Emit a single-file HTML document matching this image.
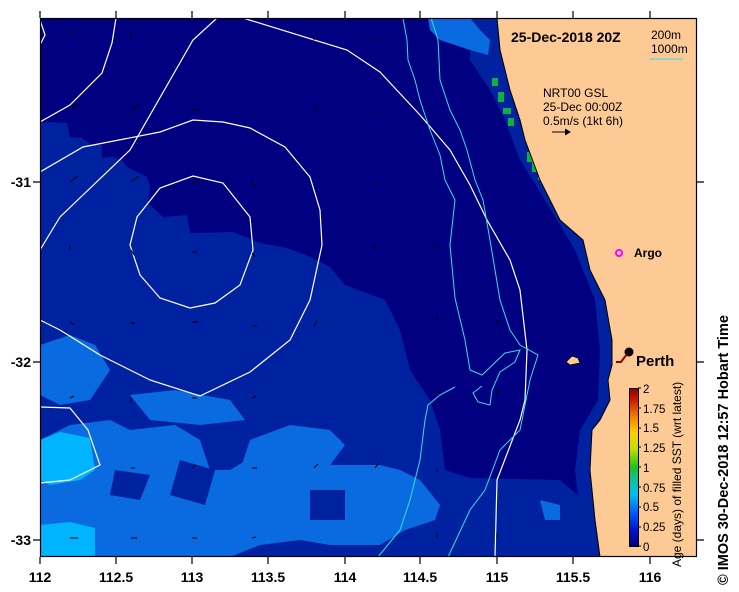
<!DOCTYPE html>
<html><head><meta charset="utf-8"><style>
html,body{margin:0;padding:0;background:#fff;width:739px;height:592px;overflow:hidden}
svg{display:block}
text{font-family:"Liberation Sans",sans-serif}
</style></head><body>
<svg width="739" height="592" viewBox="0 0 739 592" xmlns="http://www.w3.org/2000/svg">
<defs>
<linearGradient id="jet" x1="0" y1="1" x2="0" y2="0">
<stop offset="0" stop-color="#00007f"/><stop offset="0.1" stop-color="#0010d0"/><stop offset="0.22" stop-color="#0060ff"/><stop offset="0.33" stop-color="#00c0f0"/><stop offset="0.42" stop-color="#10c0a0"/><stop offset="0.5" stop-color="#20c020"/><stop offset="0.62" stop-color="#c0e000"/><stop offset="0.72" stop-color="#ffd000"/><stop offset="0.82" stop-color="#f08000"/><stop offset="0.92" stop-color="#d02000"/><stop offset="1" stop-color="#900000"/>
</linearGradient>
<clipPath id="pc"><rect x="40" y="18" width="657" height="539"/></clipPath>
</defs>
<g clip-path="url(#pc)">
<rect x="40" y="18" width="657" height="539" fill="#000080"/>
<polygon fill="#0022a0" points="40,122 67,123 70,137 82,138 92,145 102,145 102,158 113,157 122,160 127,167 147,177 150,187 148,203 163,217 187,215 190,233 233,232 260,243 287,248 313,258 330,267 345,285 385,300 400,330 410,370 430,400 440,430 445,470 470,478 560,480 580,497 600,557 40,557"/>
<polygon fill="#0022a0" points="470,18 497,18 500,50 510,90 525,140 545,185 585,245 607,300 614,350 612,400 592,430 592,480 600,557 585,557 575,470 580,430 598,400 600,350 595,300 575,250 545,200 520,160 505,120 490,90 470,60"/>
<polygon fill="#0a6ae0" points="428,18 470,18 480,30 490,40 488,55 470,50 455,45 440,40 430,30"/>
<g fill="#0a6ae0">
<polygon points="40,345 70,335 95,345 110,370 90,400 60,405 40,395"/>
<polygon points="130,395 175,390 230,400 245,420 200,425 150,420"/>
<polygon points="40,440 70,425 110,420 130,430 175,425 200,440 210,470 240,470 250,440 290,425 330,430 345,445 330,465 380,465 400,470 420,480 440,505 435,520 405,530 380,545 330,545 300,540 260,545 230,557 40,557"/>
<polygon points="230,470 280,440 320,445 300,490 260,500 240,490"/>
<polygon points="540,500 560,505 560,520 545,520"/>
</g>
<g fill="#0022a0">
<polygon points="180,460 215,470 205,505 170,495"/>
<polygon points="115,470 150,475 140,500 110,495"/>
<polygon points="310,490 345,490 345,520 310,520"/>
</g>
<polygon fill="#00b4ff" points="40,440 60,432 90,438 95,470 80,480 50,485 40,480"/>
<polygon fill="#00b4ff" points="40,525 70,522 95,528 95,557 40,557"/>
<g fill="#10b040">
<rect x="492" y="78" width="6" height="8"/><rect x="498" y="92" width="6" height="10"/><rect x="503" y="108" width="8" height="6"/><rect x="508" y="118" width="6" height="8"/>
<rect x="527" y="152" width="6" height="10"/><rect x="532" y="162" width="6" height="10"/><rect x="538" y="172" width="5" height="8"/>
</g>
<polygon fill="#fdca96" stroke="#000" stroke-width="1" points="497,18 500,50 505,70 510,90 520,120 525,140 540,180 560,220 583,240 590,270 605,300 612,340 612,365 608,380 610,400 600,420 592,430 590,470 595,520 600,557 697,557 697,18"/>
<polygon fill="#fdca96" stroke="#000" stroke-width="0.8" points="566,362 572,356 578,358 580,363 570,365"/>
<g fill="none" stroke="#fff" stroke-width="1.2">
<polyline points="40,20 45,35 40,45"/>
<polyline points="40,122 70,105 102,73 112,43 116,18"/>
<polyline points="40,250 60,217 130,150 193,40 217,18"/>
<polyline points="243,18 347,50 380,72 420,115 450,150 470,185 487,220 510,260 520,290 527,350 525,400 520,420 497,480 495,557"/>
<polyline points="40,320 60,330 100,355 150,380 200,396 250,372 290,340 310,300 322,245 320,210 310,177 285,147 250,128 223,122 193,120 160,132 83,147 40,172"/>
<polygon points="137,217 160,188 193,176 223,183 250,217 253,250 240,285 215,303 190,308 160,298 140,275 130,245"/>
<polyline points="40,407 70,408 88,430 100,465 70,480 40,483"/>
</g>
<g fill="none" stroke="#30e0e0" stroke-width="1">
<polyline points="403,18 407,40 408,60 415,80 420,100 425,115 430,130 440,155 445,180 455,200 450,245 455,298 465,340 470,370 482,375 505,353 520,350 515,362 500,372 492,390 490,405 478,402 473,393 482,386"/>
<polyline points="455,387 440,395 428,405 425,420 420,460 410,500 400,530 378,557"/>
<polyline points="431,18 438,40 440,80 450,110 460,130 467,150 475,180 483,200 490,240 500,300 510,330 520,345 538,355 530,380 520,430 500,450 485,490 470,510 448,557"/>
</g>
<g stroke="#000" stroke-width="1" fill="none">
<path d="M70,35v-6M131,38v-6M70,110l8,-6M131,110l8,-6M192,110h8M252,112h5M70,182l8,-6M131,182l8,-6M192,182h8M252,182l4,6M70,250v-5M131,250l3,5M192,252h5M252,253l3,4M70,322l4,3M131,322l4,2M192,322h6M252,326h5M314,326l3,-5M70,398l4,-2M131,398v4M192,398h5M252,398l4,-2M131,468h4M192,468l4,-3M252,468h5M70,538h8M131,538h6M192,538h5M252,538l4,-1M314,40v-4M375,40h5M314,110h4M375,110l3,3M375,180l2,4M375,250v-5M437,250v-5M437,320v-4M497,320v5M437,390v4M497,390v5M314,468l4,-4M375,468l4,-5M437,468v4M497,538v-5M437,538v-5M552,132h18"/>
<path d="M565,129l5,3l-5,3" fill="#000"/>
</g>
<circle cx="619" cy="253" r="3" fill="none" stroke="#f0f" stroke-width="2"/>
<circle cx="629" cy="352" r="4.5" fill="#000"/>
<path d="M627,354l-6,8l-5,0" stroke="#900" stroke-width="2" fill="none"/>
</g>
<rect x="40.5" y="18.5" width="656" height="538" fill="none" stroke="#000" stroke-width="1.2"/>
<g stroke="#000" stroke-width="1.2">
<path d="M40,557v7M116,557v7M192,557v7M268,557v7M345,557v7M420,557v7M497,557v7M573,557v7M650,557v7"/>
<path d="M40,18v-7M116,18v-7M192,18v-7M268,18v-7M345,18v-7M420,18v-7M497,18v-7M573,18v-7M650,18v-7"/>
<path d="M33,182h7M33,362h7M33,540h7M697,182h7M697,362h7M697,540h7"/>
</g>
<g font-size="14" font-weight="bold" fill="#000" text-anchor="middle">
<text x="40" y="582">112</text><text x="116" y="582">112.5</text><text x="192" y="582">113</text><text x="268" y="582">113.5</text><text x="345" y="582">114</text><text x="420" y="582">114.5</text><text x="497" y="582">115</text><text x="573" y="582">115.5</text><text x="650" y="582">116</text>
</g>
<g font-size="14" font-weight="bold" fill="#000" text-anchor="end">
<text x="31" y="187">-31</text><text x="31" y="367">-32</text><text x="31" y="545">-33</text>
</g>
<text x="511" y="42" font-size="14" font-weight="bold">25-Dec-2018 20Z</text>
<text x="651" y="39" font-size="12">200m</text>
<text x="651" y="53" font-size="12">1000m</text>
<line x1="650" y1="59" x2="683" y2="59" stroke="#30e0e0"/>
<text x="543" y="97" font-size="12">NRT00 GSL</text>
<text x="543" y="111" font-size="12">25-Dec 00:00Z</text>
<text x="543" y="125" font-size="12">0.5m/s (1kt 6h)</text>
<text x="634" y="257" font-size="12" font-weight="bold">Argo</text>
<text x="636" y="366" font-size="15" font-weight="bold">Perth</text>
<rect x="629.5" y="388.5" width="9" height="158" fill="url(#jet)" stroke="#000"/>
<g stroke="#000"><path d="M638,388h3M638,408h3M638,428h3M638,447h3M638,467h3M638,487h3M638,507h3M638,527h3M638,546h3"/></g>
<g font-size="11.5" fill="#000">
<text x="643" y="393">2</text><text x="643" y="413">1.75</text><text x="643" y="432">1.5</text><text x="643" y="452">1.25</text><text x="643" y="472">1</text><text x="643" y="492">0.75</text><text x="643" y="511">0.5</text><text x="643" y="531">0.25</text><text x="643" y="551">0</text>
</g>
<text transform="translate(681,567) rotate(-90)" font-size="12" fill="#000">Age (days) of filled SST (wrt latest)</text>
<text transform="translate(728,585) rotate(-90)" font-size="14.5" font-weight="bold" fill="#000">© IMOS 30-Dec-2018 12:57 Hobart Time</text>
</svg>
</body></html>
